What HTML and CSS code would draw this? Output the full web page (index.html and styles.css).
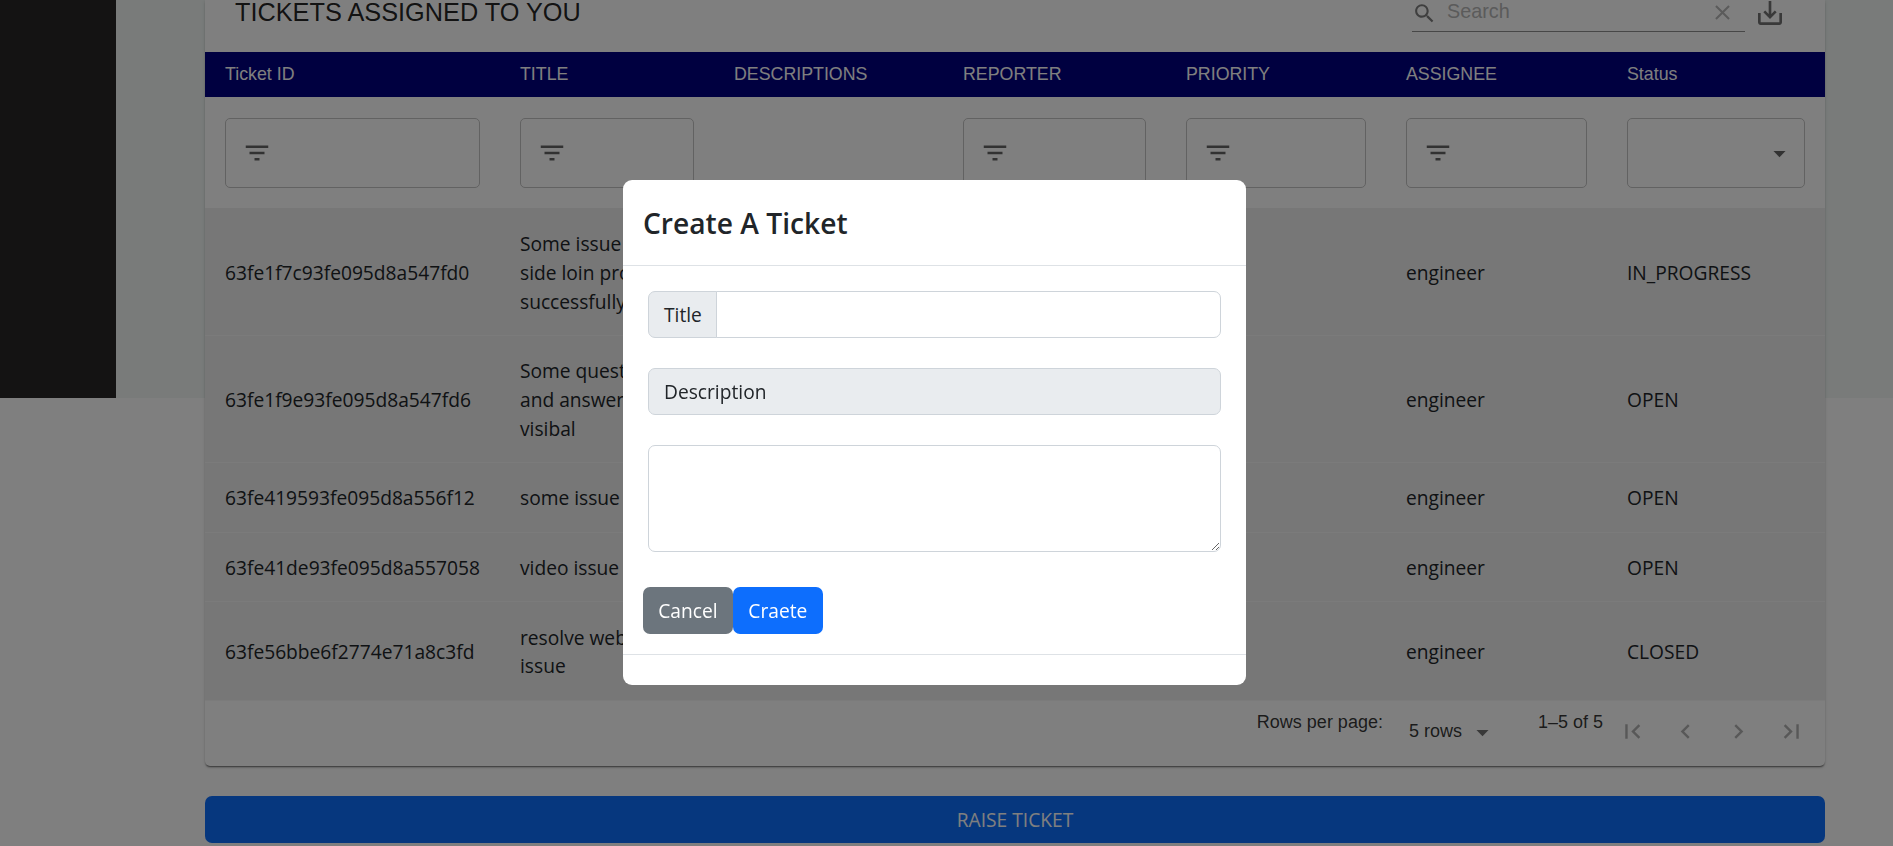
FILE: index.html
```html
<!DOCTYPE html>
<html>
<head>
    <title>Tickets</title>
    <link rel="stylesheet" href="styles.css">
</head>
<body>
    <div class="page">
        <aside class="sidebar"></aside>

        <main class="content">
            <section class="card">
                <div class="toolbar">
                    <h2 class="toolbar-title">TICKETS ASSIGNED TO YOU</h2>
                    <div class="search">
                        <svg class="icon search-icon" viewBox="0 0 24 24"><path d="M15.5 14h-.79l-.28-.27C15.41 12.59 16 11.11 16 9.5 16 5.91 13.09 3 9.5 3S3 5.91 3 9.5 5.91 16 9.5 16c1.61 0 3.09-.59 4.23-1.57l.27.28v.79l5 4.99L20.49 19l-4.99-5zm-6 0C7.01 14 5 11.99 5 9.5S7.01 5 9.5 5 14 7.01 14 9.5 11.99 14 9.5 14z"/></svg>
                        <span class="search-text">Search</span>
                        <svg class="icon clear-icon" viewBox="0 0 24 24"><path d="M19 6.41L17.59 5 12 10.59 6.41 5 5 6.41 10.59 12 5 17.59 6.41 19 12 13.41 17.59 19 19 17.59 13.41 12z"/></svg>
                    </div>
                    <svg class="icon export-icon" viewBox="0 0 24 24"><path d="M19 12v7H5v-7H3v7c0 1.1.9 2 2 2h14c1.1 0 2-.9 2-2v-7h-2zm-6 .67l2.59-2.58L17 11.5l-5 5-5-5 1.41-1.41L11 12.67V3h2z"/></svg>
                </div>

                <table class="tickets">
                    <colgroup>
                        <col class="col-id">
                        <col class="col-title">
                        <col class="col-desc">
                        <col class="col-reporter">
                        <col class="col-priority">
                        <col class="col-assignee">
                        <col class="col-status">
                    </colgroup>
                    <thead>
                        <tr class="head-row">
                            <th>Ticket ID</th>
                            <th>TITLE</th>
                            <th>DESCRIPTIONS</th>
                            <th>REPORTER</th>
                            <th>PRIORITY</th>
                            <th>ASSIGNEE</th>
                            <th>Status</th>
                        </tr>
                        <tr class="filter-row">
                            <td><div class="filter"><svg class="icon filter-icon" viewBox="0 0 24 24"><path d="M10 18h4v-2h-4v2zM3 6v2h18V6H3zm3 7h12v-2H6v2z"/></svg></div></td>
                            <td><div class="filter"><svg class="icon filter-icon" viewBox="0 0 24 24"><path d="M10 18h4v-2h-4v2zM3 6v2h18V6H3zm3 7h12v-2H6v2z"/></svg></div></td>
                            <td></td>
                            <td><div class="filter"><svg class="icon filter-icon" viewBox="0 0 24 24"><path d="M10 18h4v-2h-4v2zM3 6v2h18V6H3zm3 7h12v-2H6v2z"/></svg></div></td>
                            <td><div class="filter"><svg class="icon filter-icon" viewBox="0 0 24 24"><path d="M10 18h4v-2h-4v2zM3 6v2h18V6H3zm3 7h12v-2H6v2z"/></svg></div></td>
                            <td><div class="filter"><svg class="icon filter-icon" viewBox="0 0 24 24"><path d="M10 18h4v-2h-4v2zM3 6v2h18V6H3zm3 7h12v-2H6v2z"/></svg></div></td>
                            <td><div class="filter filter-select"><svg class="icon arrow-icon" viewBox="0 0 24 24"><path d="M7 10l5 5 5-5z"/></svg></div></td>
                        </tr>
                    </thead>
                    <tbody>
                        <tr>
                            <td>63fe1f7c93fe095d8a547fd0</td>
                            <td>Some issue in<br>side loin process<br>successfully</td>
                            <td></td><td></td><td></td>
                            <td>engineer</td>
                            <td>IN_PROGRESS</td>
                        </tr>
                        <tr>
                            <td>63fe1f9e93fe095d8a547fd6</td>
                            <td>Some question<br>and answer not<br>visibal</td>
                            <td></td><td></td><td></td>
                            <td>engineer</td>
                            <td>OPEN</td>
                        </tr>
                        <tr>
                            <td>63fe419593fe095d8a556f12</td>
                            <td>some issue</td>
                            <td></td><td></td><td></td>
                            <td>engineer</td>
                            <td>OPEN</td>
                        </tr>
                        <tr>
                            <td>63fe41de93fe095d8a557058</td>
                            <td>video issue</td>
                            <td></td><td></td><td></td>
                            <td>engineer</td>
                            <td>OPEN</td>
                        </tr>
                        <tr>
                            <td>63fe56bbe6f2774e71a8c3fd</td>
                            <td>resolve website<br>issue</td>
                            <td></td><td></td><td></td>
                            <td>engineer</td>
                            <td>CLOSED</td>
                        </tr>
                    </tbody>
                </table>

                <div class="pager">
                    <span class="pager-label">Rows per page:</span>
                    <span class="pager-size">5 rows</span>
                    <svg class="icon pager-arrow" viewBox="0 0 24 24"><path d="M7 10l5 5 5-5z"/></svg>
                    <span class="pager-count">1–5 of 5</span>
                    <div class="pager-buttons">
                        <svg class="icon pager-icon" viewBox="0 0 24 24"><path d="M18.41 16.59L13.82 12l4.59-4.59L17 6l-6 6 6 6zM6 6h2v12H6z"/></svg>
                        <svg class="icon pager-icon" viewBox="0 0 24 24"><path d="M15.41 7.41L14 6l-6 6 6 6 1.41-1.41L10.83 12z"/></svg>
                        <svg class="icon pager-icon" viewBox="0 0 24 24"><path d="M10 6L8.59 7.41 13.17 12l-4.58 4.59L10 18l6-6z"/></svg>
                        <svg class="icon pager-icon" viewBox="0 0 24 24"><path d="M5.59 7.41L10.18 12l-4.59 4.59L7 18l6-6-6-6zM16 6h2v12h-2z"/></svg>
                    </div>
                </div>
            </section>

            <button class="raise">RAISE TICKET</button>
        </main>
    </div>

    <div class="backdrop"></div>

    <section class="modal">
        <header class="modal-header">
            <h3 class="modal-title">Create A Ticket</h3>
        </header>
        <div class="modal-body">
            <div class="input-group">
                <label class="addon" for="title">Title</label>
                <input class="input" type="text" id="title">
            </div>
            <div class="input-group">
                <label class="addon addon-full" for="description">Description</label>
            </div>
            <textarea class="textarea" id="description"></textarea>
            <div class="actions">
                <button class="btn btn-cancel">Cancel</button>
                <button class="btn btn-create">Craete</button>
            </div>
        </div>
        <footer class="modal-footer"></footer>
    </section>
</body>
</html>
```

FILE: styles.css
```css
* {
    box-sizing: border-box;
}
html, body {
    height: 100%;
}
body {
    margin: 0;
    overflow: hidden;
    font-family: "Open Sans", sans-serif;
    font-size: 19.2px;
    color: #212529;
    background: linear-gradient(#f2f7f5, #f2f7f5) no-repeat 0 0 / 100% 398px, #fff;
}
.page {
    display: flex;
}
.sidebar {
    flex: none;
    width: 116px;
    height: 398px;
    background: #282626;
}
.content {
    flex: 1;
    padding: 0 68px 0 89px;
}
.icon {
    display: block;
    flex: none;
    fill: currentColor;
}

/* card */
.card {
    background: #fff;
    border-radius: 0 0 5px 5px;
    box-shadow: 0 2px 2px -1px rgba(0,0,0,.45), 0 1px 1px rgba(0,0,0,.14), 0 1px 4px rgba(0,0,0,.12);
}
.toolbar {
    display: flex;
    align-items: flex-start;
    height: 52px;
    padding-left: 30px;
    font-family: "Liberation Sans", sans-serif;
}
.toolbar-title {
    flex: 1;
    margin: 0;
    font-size: 25.3px;
    font-weight: 400;
    line-height: 25px;
    color: rgba(0, 0, 0, .87);
}
.search {
    display: flex;
    align-items: flex-start;
    width: 333px;
    height: 32px;
    border-bottom: 1px solid #8e8e8e;
    color: #b6b6b6;
}
.search-icon {
    width: 25px;
    height: 25px;
    margin-top: 1px;
    color: #000;
    opacity: .5;
}
.search-text {
    flex: 1;
    margin-left: 10px;
    font-size: 19.8px;
    line-height: 22px;
}
.clear-icon {
    width: 25px;
    height: 25px;
    margin: 0 10px 0 0;
}
.export-icon {
    width: 32px;
    height: 32px;
    margin: -3px 39px 0 9px;
    color: #000;
    opacity: .55;
}

/* table */
.tickets {
    width: 100%;
    table-layout: fixed;
    border-collapse: collapse;
}
.col-id { width: 295px; }
.col-title { width: 214px; }
.col-desc { width: 229px; }
.col-reporter { width: 223px; }
.col-priority { width: 220px; }
.col-assignee { width: 221px; }
.head-row th {
    height: 45px;
    padding: 0 20px;
    background: #000080;
    color: #fff;
    font-family: "Liberation Sans", sans-serif;
    font-size: 17.8px;
    font-weight: 400;
    text-align: left;
}
.filter-row td {
    padding: 21px 20px 20px;
    border-bottom: 1px solid #eee;
}
.filter {
    display: flex;
    align-items: center;
    height: 70px;
    padding-left: 16px;
    border: 1px solid #c4c4c4;
    border-radius: 5px;
}
.filter-icon {
    width: 30px;
    height: 30px;
    color: #000;
    opacity: .6;
}
.filter-select {
    justify-content: flex-end;
    padding: 0 10px 0 0;
}
.arrow-icon {
    width: 29px;
    height: 29px;
    color: #000;
    opacity: .6;
}
tbody td {
    padding: 21.3px 20px 18.35px;
    line-height: 28.8px;
    background: #eeeeee;
    border-bottom: 1px solid #f6f6f6;
    white-space: nowrap;
}
tbody tr:last-child td {
    height: 99px;
}

/* pagination */
.pager {
    display: flex;
    align-items: flex-start;
    justify-content: flex-end;
    height: 65px;
    padding: 9px 7px 0 0;
    font-family: "Liberation Sans", sans-serif;
    font-size: 18px;
    line-height: 24px;
    color: rgba(0, 0, 0, .8);
}
.pager-size {
    margin: 9px 0 0 26px;
}
.pager-arrow {
    width: 29px;
    height: 29px;
    margin: 8px 0 0 6px;
    color: #000;
    opacity: .55;
}
.pager-count {
    margin-left: 41px;
}
.pager-buttons {
    display: flex;
    margin: 7px 0 0 3px;
}
.pager-icon {
    width: 29px;
    height: 29px;
    margin: 0 12px;
    color: #000;
    opacity: .3;
}

.raise {
    display: block;
    width: 100%;
    height: 47px;
    margin-top: 30px;
    border: 0;
    border-radius: 7px;
    background: #0d6efd;
    color: #fff;
    font-family: "Open Sans", sans-serif;
    font-size: 19.2px;
}

/* modal */
.backdrop {
    position: fixed;
    inset: 0;
    background: rgba(0, 0, 0, .5);
}
.modal {
    position: fixed;
    left: 623px;
    top: 180px;
    width: 623px;
    display: flex;
    flex-direction: column;
    background: #fff;
    border-radius: 9px;
}
.modal-header {
    height: 86px;
    padding: 0 20px;
    display: flex;
    align-items: center;
    border-bottom: 1px solid #dee2e6;
}
.modal-title {
    margin: 0;
    font-size: 28.2px;
    font-weight: 600;
}
.modal-body {
    padding: 25px 20px 20px;
    border-bottom: 1px solid #dee2e6;
}
.modal-footer {
    height: 30px;
}
.input-group {
    display: flex;
    height: 47px;
    margin: 0 5px 30px;
}
.addon {
    display: flex;
    align-items: center;
    padding: 0 14px 0 15px;
    background: #e9ecef;
    border: 1px solid #ced4da;
    border-radius: 7px 0 0 7px;
}
.addon-full {
    flex: 1;
    border-radius: 7px;
}
.input {
    flex: 1;
    margin-left: -1px;
    border: 1px solid #ced4da;
    border-radius: 0 7px 7px 0;
    outline: 0;
}
.textarea {
    display: block;
    width: 573px;
    height: 107px;
    margin: 0 5px;
    border: 1px solid #ced4da;
    border-radius: 7px;
    outline: 0;
}
.actions {
    display: flex;
    margin-top: 35px;
}
.btn {
    height: 47px;
    padding: 0 15.6px;
    border: 0;
    border-radius: 7px;
    color: #fff;
    font-family: "Open Sans", sans-serif;
    font-size: 19.2px;
}
.btn-cancel {
    padding: 0 15.2px;
    background: #6c757d;
}
.btn-create {
    background: #0d6efd;
}
```
